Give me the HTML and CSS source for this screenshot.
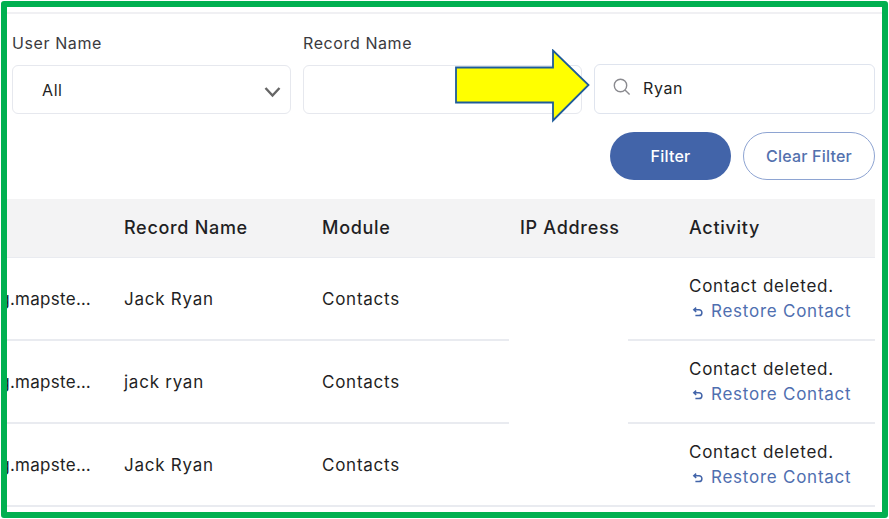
FILE: index.html
```html
<!DOCTYPE html>
<html lang="en">
<head>
<meta charset="utf-8">
<title>Activity log</title>
<link rel="stylesheet" href="styles.css">
</head>
<body>
<div class="frame">
  <div class="topline"></div>
  <div class="filters">
    <div class="field">
      <label class="label">User Name</label>
      <div class="control select">
        <span>All</span>
        <svg class="chev" width="17" height="12" viewBox="0 0 17 12"><path d="M1.5 2 8.5 9.5 15.5 2" fill="none" stroke="#666" stroke-width="2.4"/></svg>
      </div>
    </div>
    <div class="field">
      <label class="label">Record Name</label>
      <div class="control"></div>
    </div>
    <div class="field search-field">
      <div class="control search">
        <svg class="mag" width="18" height="18" viewBox="0 0 18 18"><circle cx="7.5" cy="7.5" r="6.2" fill="none" stroke="#8a8a8f" stroke-width="1.4"/><path d="M12 12l4.6 4.6" stroke="#8a8a8f" stroke-width="1.4" fill="none"/></svg>
        <span>Ryan</span>
      </div>
    </div>
  </div>
  <div class="actions">
    <button class="btn primary">Filter</button>
    <button class="btn outline">Clear Filter</button>
  </div>
  <div class="table">
    <div class="row head">
      <div class="cell"></div>
      <div class="cell">Record Name</div>
      <div class="cell">Module</div>
      <div class="cell ip">IP Address</div>
      <div class="cell act">Activity</div>
    </div>
    <div class="row">
      <div class="cell user"><span>g.mapste…</span></div>
      <div class="cell">Jack Ryan</div>
      <div class="cell">Contacts</div>
      <div class="cell ip"></div>
      <div class="cell act"><div>Contact deleted.</div><a class="restore"><svg width="12" height="12" viewBox="0 0 12 12"><path d="M4.2 1.6 1.8 3.8l2.4 2.2M2 3.8h5a2.9 2.9 0 0 1 0 5.8H3.4" fill="none" stroke="#4264a9" stroke-width="1.5"/></svg>Restore Contact</a></div>
    </div>
    <div class="row">
      <div class="cell user"><span>g.mapste…</span></div>
      <div class="cell">jack ryan</div>
      <div class="cell">Contacts</div>
      <div class="cell ip"></div>
      <div class="cell act"><div>Contact deleted.</div><a class="restore"><svg width="12" height="12" viewBox="0 0 12 12"><path d="M4.2 1.6 1.8 3.8l2.4 2.2M2 3.8h5a2.9 2.9 0 0 1 0 5.8H3.4" fill="none" stroke="#4264a9" stroke-width="1.5"/></svg>Restore Contact</a></div>
    </div>
    <div class="row">
      <div class="cell user"><span>g.mapste…</span></div>
      <div class="cell">Jack Ryan</div>
      <div class="cell">Contacts</div>
      <div class="cell ip last"></div>
      <div class="cell act"><div>Contact deleted.</div><a class="restore"><svg width="12" height="12" viewBox="0 0 12 12"><path d="M4.2 1.6 1.8 3.8l2.4 2.2M2 3.8h5a2.9 2.9 0 0 1 0 5.8H3.4" fill="none" stroke="#4264a9" stroke-width="1.5"/></svg>Restore Contact</a></div>
    </div>
  </div>
  <svg class="arrow" width="136" height="74" viewBox="0 0 136 74"><path d="M1 18.500H98V1.500L133.500 36 98 71.500V53.500H1Z" fill="#ffff00" stroke="#1f5c99" stroke-width="1.800"/></svg>
</div>
</body>
</html>
```
FILE: styles.css
```css
* { box-sizing: border-box; }
html, body { margin: 0; padding: 0; background: #fff; }
body { font-family: Inter, "Open Sans", sans-serif; color: #1f1f24; overflow: hidden; }
.frame {
  position: relative;
  width: 887px;
  height: 517px;
  margin: 1px;
  border: 6px solid #00b050;
  border-radius: 3px;
  background: #fff;
  overflow: hidden;
}
.topline { height: 2px; margin-top: 5px; background: #f0f0f3; }
.filters { display: flex; gap: 12px; padding: 0 7px 0 5px; margin-top: 19px; height: 81px; }
.field { width: 279px; display: flex; flex-direction: column; }
.search-field { width: 281px; justify-content: flex-end; }
.label { height: 32px; line-height: 20px; font-size: 16px; letter-spacing: .6px; color: #3a3a40; }
.control {
  height: 49px;
  border: 1px solid #e6e8ee;
  border-radius: 6px;
  background: #fff;
  display: flex;
  align-items: center;
  font-size: 16px;
  letter-spacing: .6px;
}
.select { padding-left: 29px; justify-content: space-between; padding-right: 9px; padding-top: 1px; }
.chev { margin-top: 4px; }
.search { height: 50px; border-color: #dfe4ee; padding-left: 18px; gap: 12px; padding-bottom: 2px; }
.mag { margin-top: -3px; }
.actions { display: flex; justify-content: flex-end; gap: 12px; padding-right: 7px; margin-top: 18px; }
.btn {
  height: 48px;
  border-radius: 24px;
  font: 500 16px Inter, sans-serif;
  letter-spacing: .2px;
  background: #fff;
  padding: 0;
}
.primary { width: 121px; background: #4264a9; color: #fff; border: 0; }
.outline { width: 132px; border: 1px solid #8ea4d2; color: #5371ae; }
.table { margin-top: 19px; width: 868px; font-size: 17px; letter-spacing: .75px; }
.row {
  display: grid;
  grid-template-columns: 107px 198px 197px 119px 247px;
  height: 83px;
}
.head { height: 59px; background: #f3f3f4; border-bottom: 1px solid #e9ebf0; font-weight: 500; font-size: 18px; letter-spacing: .7px; }
.cell { display: flex; align-items: center; padding-left: 10px; border-bottom: 2px solid #e9ebf0; white-space: nowrap; overflow: hidden; }
.head .cell { border-bottom: 0; padding-bottom: 2px; }
.row .ip { padding-left: 11px; border-bottom: 0; }
.row .last { border-bottom: 2px solid #e9ebf0; }
.row .act { padding-left: 61px; }
.row:not(.head) .act { flex-direction: column; align-items: flex-start; justify-content: center; padding-top: 1px; line-height: 25px; }
.user { justify-content: flex-end; padding: 0 23px 0 0; }
.user span { flex: none; letter-spacing: .3px; }
.restore { display: flex; align-items: center; gap: 7px; padding-left: 3px; color: #4f6fb0; }
.arrow { position: absolute; left: 448px; top: 42px; }
```
